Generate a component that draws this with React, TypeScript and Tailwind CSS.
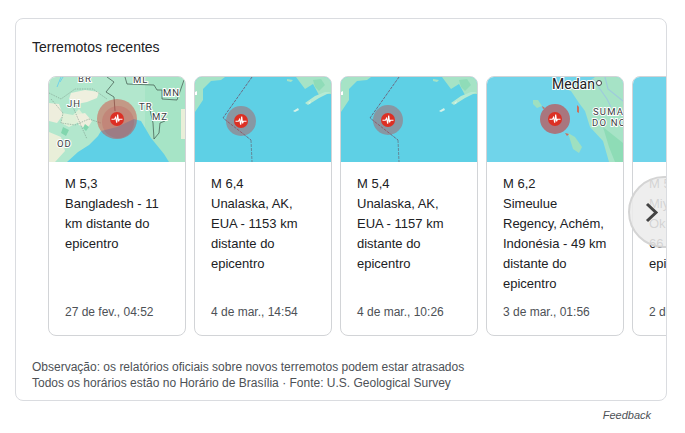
const pulse = "M-5.5 0.3H-2.6L-1.4-1.8-.3 3.6 .7-4.4 1.6 2.4 2.4 0.3H5.5";

function Pin({ x, y }: { x: number; y: number }) {
  return (
    <g transform={`translate(${x} ${y})`}>
      <circle r="7" fill="#dc2f24" />
      <path d={pulse} fill="none" stroke="#fff" strokeWidth="1.1" />
    </g>
  );
}

function BayMap() {
  return (
    <svg viewBox="0 0 136 85" className="block h-[85px] w-full shrink-0" style={{ fontFamily: "Roboto, sans-serif" }}>
      <rect width="136" height="85" fill="#b2e7cd" />
      <rect x="96" width="40" height="85" fill="#a6e4c6" />
      <path d="M22 16 36 13 50 15 48 21 38 25 28 27 20 22Z" fill="#eff0df" />
      <path d="M0 26 10 27 14 38 8 46 0 44Z" fill="#eeeedd" />
      <path d="M13 36 24 38 30 32 36 40 28 46 20 50 12 46Z" fill="#dff0d8" />
      <path d="M26 38 36 36 43 44 38 52 30 48Z" fill="#eeeedd" />
      <path d="M14 50 20 53 17 59 12 56ZM36 47 40 50 37 54 34 51Z" fill="#82d6ae" />
      <path d="M0 55 12 60 16 74 6 85H0ZM132 32h4v30h-4Z" fill="#e9efd9" />
      <path d="M12 0 8 10M14 0 11 5" stroke="#70d2ea" fill="none" />
      <path d="M18 85 29 75 40 68 49 59 52 54 68 50 85 42 92 44 102 61 115 77 120 85Z" fill="#5fd0e6" />
      <path d="M0 16 12 22 26 12 44 12 58 22M2 22 14 36 12 46 26 48 40 42 52 46M24 30 30 44 38 62" stroke="#7c9a8c" strokeDasharray="1.5 1" fill="none" strokeWidth="0.6" />
      <path d="M58 0 65 5 57 15 65 20 66 34M76 0 78 7 105 8 108 13 113 13 113 22 128 23 135 3M101 33 104 46 105 62M111 46 116 44M111 46 110 56 105 62" stroke="#3d5349" fill="none" strokeWidth="0.7" />
      <circle cx="68" cy="42" r="20" fill="rgba(214,58,48,.45)" />
      <circle cx="69" cy="45" r="16" fill="rgba(190,60,70,.2)" />
      <g fontSize="9.5" fill="#3c4043" stroke="#fff" strokeWidth="2" paintOrder="stroke" letterSpacing="1">
        <text x="29" y="5">BR</text>
        <text x="84" y="6">ML</text>
        <text x="114" y="19">MN</text>
        <text x="18" y="30">JH</text>
        <text x="90" y="33">TR</text>
        <text x="103" y="43">MZ</text>
        <text x="8" y="70">OD</text>
      </g>
      <Pin x={68} y={42} />
    </svg>
  );
}

function AleutianMap({ dx, dy }: { dx: number; dy: number }) {
  return (
    <svg viewBox="0 0 136 85" className="block h-[85px] w-full shrink-0">
      <rect width="136" height="85" fill="#5ed0e5" />
      <path d="M0 0H30L26 3 16 4 8 12 8 23 0 35Z" fill="#a6e3c6" />
      <path d="M92 2 98 3 96 5 92 4ZM101 0H136V17H130L124 18 118 7 110 12Z" fill="#a6e3c6" />
      <path d="M118 3 126 2 130 8 124 14 120 10Z" fill="#8fdcb8" />
      <path d="M136 15 124 21 113 28 110 26 120 19 130 15Z" fill="#b6ead3" />
      <path d="M98 34 103 31 104 33 100 35ZM113 26 116 24 115 27Z" fill="#d6f2e8" />
      <path d="M0 15 2 14 2 18 0 18Z" fill="#fff" />
      <g transform={`translate(${dx} 0)`}>
        <path d="M57 0 28 41 56 63" stroke="#6d6078" strokeWidth="0.9" strokeDasharray="3 1" fill="none" />
        <path d="M56 63 57 85" stroke="#63899a" strokeWidth="1" strokeDasharray="3 1" fill="none" />
        <circle cx="46" cy={44 + dy} r="15" fill="rgba(193,72,72,.42)" />
        <Pin x={46} y={44 + dy} />
      </g>
    </svg>
  );
}

function SumatraMap() {
  return (
    <svg viewBox="0 0 136 85" className="block h-[85px] w-full shrink-0" style={{ fontFamily: "Roboto, sans-serif" }}>
      <rect width="136" height="85" fill="#70d4ea" />
      <path d="M70 9 84 14 92 26 98 34 103 50 116 64 122 85H136V0H108L100 6Z" fill="#a6e3c6" />
      <path d="M116 50 136 66V85H128L122 70Z" fill="#8edcb6" />
      <path d="M118 0 121 12 136 24M106 2 120 22 124 30" stroke="#9fcbdc" fill="none" strokeWidth="1.2" />
      <path d="M46 23 51 23 55 29 50 31 46 27Z" fill="#9ee0c0" />
      <path d="M81 56 88 60 95 70 92 76 86 72Z" fill="#9ee0c0" />
      <path d="M90 28 92 30 92 36 90 35ZM55 29 58 31 56 32ZM78 56 82 57 80 59Z" fill="#c9705e" />
      <circle cx="68" cy="42" r="15" fill="rgba(205,60,60,.62)" />
      <Pin x={68} y={42} />
      <g fill="#202124" stroke="#fff" strokeWidth="2" paintOrder="stroke">
        <text x="65" y="12" fontSize="14">Medan</text>
        <g fontSize="9.5" letterSpacing="1.2" fill="#3c4043">
          <text x="106" y="38">SUMA</text>
          <text x="105" y="49">DO NO</text>
        </g>
      </g>
      <circle cx="112" cy="6" r="2.5" fill="#fff" stroke="#3c4043" />
    </svg>
  );
}

const quakes = [
  { map: <BayMap />, mag: "M 5,3", place: "Bangladesh - 11 km distante do epicentro", date: "27 de fev., 04:52" },
  { map: <AleutianMap dx={0} dy={0} />, mag: "M 6,4", place: "Unalaska, AK, EUA - 1153 km distante do epicentro", date: "4 de mar., 14:54" },
  { map: <AleutianMap dx={1} dy={-1} />, mag: "M 5,4", place: "Unalaska, AK, EUA - 1157 km distante do epicentro", date: "4 de mar., 10:26" },
  { map: <SumatraMap />, mag: "M 6,2", place: "Simeulue Regency, Achém, Indonésia - 49 km distante do epicentro", date: "3 de mar., 01:56" },
  { map: <div className="h-[85px] shrink-0 bg-[#70d4ea]" />, mag: "M 5,1", place: "Miyakojima, Okinawa, Japão - 66 km distante do epicentro", date: "2 de mar., 08:11" },
];

export default function App() {
  return (
    <div className="w-[685px] h-[433px] bg-white pl-[15px] pt-[18px] font-['Liberation_Sans',Arial,sans-serif] text-[#202124]">
      <div className="relative h-[383px] w-[652px] overflow-hidden rounded-lg border border-[#dadce0]">
        <h2 className="mt-[18px] ml-4 text-sm leading-5 font-normal">Terremotos recentes</h2>
        <div className="mt-[19px] ml-8 flex gap-2 overflow-hidden">
          {quakes.map((q) => (
            <div key={q.date} className="flex h-[260px] w-[138px] shrink-0 flex-col overflow-hidden rounded-lg border border-[#d2d4d7]">
              {q.map}
              <div className="flex flex-1 flex-col px-4 pt-3 pb-[15px]">
                <div className="text-[13px] leading-5">
                  <div>{q.mag}</div>
                  <div>{q.place}</div>
                </div>
                <div className="mt-auto text-xs leading-4 text-[#4d5156]">{q.date}</div>
              </div>
            </div>
          ))}
        </div>
        <div className="mt-[23px] ml-4 text-xs leading-4 text-[#4d5156]">
          <div>Observação: os relatórios oficiais sobre novos terremotos podem estar atrasados</div>
          <div>Todos os horários estão no Horário de Brasília · Fonte: U.S. Geological Survey</div>
        </div>
        <button className="absolute top-[157px] left-[612px] flex h-[72px] w-[72px] items-center rounded-full border-2 border-[#d4d4d4] bg-[rgba(236,236,236,0.88)] pl-[15px]">
          <svg width="14" height="21" viewBox="0 0 14 21" fill="none" stroke="#444" strokeWidth="3">
            <path d="M2 2l9 8.5-9 8.5" />
          </svg>
        </button>
      </div>
      <div className="mt-[6px] w-[636px] text-right text-[11px] leading-4 text-[#4d5156] italic">Feedback</div>
    </div>
  );
}
